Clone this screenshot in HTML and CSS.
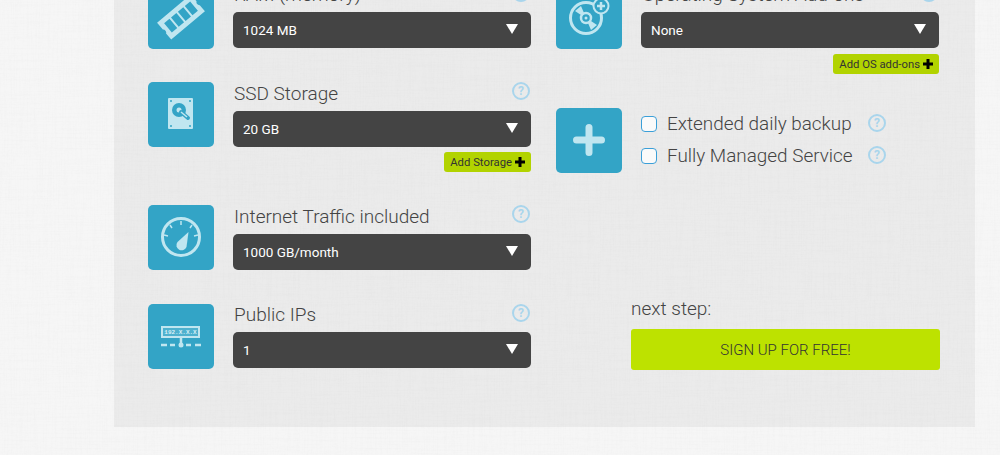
FILE: index.html
```html
<!DOCTYPE html>
<html lang="en">
<head>
  <meta charset="UTF-8">
  <title>Configure your server</title>
  <link rel="stylesheet" href="styles.css">
</head>
<body>
  <div class="panel">
    <div class="column">

      <div class="row row-tight">
        <div class="icon">
          <svg viewBox="0 0 66 65" width="66" height="65">
            <g transform="rotate(-40 33 33)">
              <path class="light" fill-rule="evenodd" d="M11 22h44v9a3 3 0 0 0 0 5v8H11v-8a3 3 0 0 0 0-5zM16 27v12h7V27zM25 27v12h7V27zM34 27v12h7V27zM43 27v12h7V27z"/>
            </g>
          </svg>
        </div>
        <div class="field">
          <div class="field-head"><label>RAM (memory)</label><span class="help">?</span></div>
          <div class="select"><select><option>1024 MB</option></select></div>
        </div>
      </div>

      <div class="row">
        <div class="icon">
          <svg viewBox="0 0 66 65" width="66" height="65">
            <rect class="light" x="20" y="16" width="25" height="31" rx="1"/>
            <circle class="dark" cx="31" cy="28" r="7"/>
            <circle class="light" cx="31" cy="28" r="2.500"/>
            <path class="dark-line" d="M33 30l7 6"/>
            <path class="light-line thin" d="M33 30l6 5"/>
            <circle class="dark" cx="23" cy="19" r="1"/><circle class="dark" cx="42" cy="19" r="1"/>
            <circle class="dark" cx="23" cy="44" r="1"/><circle class="dark" cx="42" cy="44" r="1"/>
          </svg>
        </div>
        <div class="field">
          <div class="field-head"><label>SSD Storage</label><span class="help">?</span></div>
          <div class="select"><select><option>20 GB</option></select></div>
          <div class="add-row"><a class="add" href="#">Add Storage <svg class="add-plus" viewBox="0 0 10 10" width="10" height="10"><path d="M3.5 0h3v3.5H10v3H6.500V10h-3V6.500H0v-3h3.500z"/></svg></a></div>
        </div>
      </div>

      <div class="row row-traffic">
        <div class="icon">
          <svg viewBox="0 0 66 65" width="66" height="65">
            <circle class="ring" cx="33" cy="32" r="18.500"/>
            <path class="light-line thin" d="M33 16v4M22 20l2 3M44 20l-2 3M16 30l4 1M50 30l-4 1"/>
            <path class="light" d="M40.500 27L38.500 42a5.200 5.200 0 1 1-9-5z"/>
          </svg>
        </div>
        <div class="field">
          <div class="field-head"><label>Internet Traffic included</label><span class="help">?</span></div>
          <div class="select"><select><option>1000 GB/month</option></select></div>
        </div>
      </div>

      <div class="row row-tight">
        <div class="icon">
          <svg viewBox="0 0 66 65" width="66" height="65">
            <rect class="ip-box" x="14" y="23" width="37" height="10"/>
            <text class="ip-text" x="32.500" y="30.300" text-anchor="middle">192.X.X.X</text>
            <path class="light-line" d="M33 34v7M13 41h6M22 41h5M38 41h5M47 41h6"/>
            <circle class="light" cx="33" cy="41" r="2.500"/>
          </svg>
        </div>
        <div class="field">
          <div class="field-head"><label>Public IPs</label><span class="help">?</span></div>
          <div class="select"><select><option>1</option></select></div>
        </div>
      </div>
    </div>

    <div class="column">
      <div class="row row-tight row-os">
        <div class="icon">
          <svg viewBox="0 0 66 65" width="66" height="65">
            <circle class="ring" cx="30" cy="34" r="15.500"/>
            <path class="light" d="M19 27l6-5 3 7-3 2zM41 41l-6 5-3-7 3-2z"/>
            <circle class="ring thin" cx="30" cy="34" r="5"/>
            <circle class="light" cx="30" cy="34" r="1.500"/>
            <circle class="badge" cx="45" cy="22" r="7.500"/>
            <path class="light-line" d="M45 18v8M41 22h8"/>
          </svg>
        </div>
        <div class="field">
          <div class="field-head"><label>Operating System Add-ons</label><span class="help">?</span></div>
          <div class="select"><select><option>None</option></select></div>
          <div class="add-row"><a class="add" href="#">Add OS add-ons <svg class="add-plus" viewBox="0 0 10 10" width="10" height="10"><path d="M3.5 0h3v3.5H10v3H6.500V10h-3V6.500H0v-3h3.500z"/></svg></a></div>
        </div>
      </div>

      <div class="row row-extras">
        <div class="icon">
          <svg viewBox="0 0 66 65" width="66" height="65">
            <path class="plus-line" d="M33 19.500v25M20.500 32h25"/>
          </svg>
        </div>
        <div class="checks">
          <div class="check"><input type="checkbox"><label>Extended daily backup</label><span class="help">?</span></div>
          <div class="check"><input type="checkbox"><label>Fully Managed Service</label><span class="help">?</span></div>
        </div>
      </div>

      <div class="next">
        <div class="next-label">next step:</div>
        <a class="signup" href="#">SIGN UP FOR FREE!</a>
      </div>
    </div>
  </div>
</body>
</html>
```

FILE: styles.css
```css
* {
  box-sizing: border-box;
  margin: 0;
  padding: 0;
}

html, body {
  height: 455px;
  overflow: hidden;
}

body {
  font-family: "Roboto", "Liberation Sans", sans-serif;
  font-weight: 300;
  color: #444;
  background-color: #f6f6f6;
  background-image: url("data:image/svg+xml,%3Csvg xmlns='http://www.w3.org/2000/svg' width='300' height='300'%3E%3Cfilter id='n'%3E%3CfeTurbulence type='fractalNoise' baseFrequency='0.02 0.7' numOctaves='2' stitchTiles='stitch'/%3E%3CfeColorMatrix values='0 0 0 0 0.5 0 0 0 0 0.5 0 0 0 0 0.5 0.5 0 0 0 -0.2'/%3E%3C/filter%3E%3Cfilter id='m'%3E%3CfeTurbulence type='fractalNoise' baseFrequency='0.7 0.02' numOctaves='2' stitchTiles='stitch'/%3E%3CfeColorMatrix values='0 0 0 0 0.5 0 0 0 0 0.5 0 0 0 0 0.5 0.5 0 0 0 -0.2'/%3E%3C/filter%3E%3Crect width='300' height='300' filter='url(%23n)' opacity='.15'/%3E%3Crect width='300' height='300' filter='url(%23m)' opacity='.15'/%3E%3C/svg%3E");
}

.panel {
  display: flex;
  gap: 24px;
  margin: -50px 25px 0 114px;
  padding: 34px 35px 57px 34px;
  background: rgba(0, 0, 0, 0.045);
}

.column {
  width: 384px;
}

.row {
  display: flex;
  margin-bottom: 33px;
}

.row:last-child {
  margin-bottom: 0;
}

.row-traffic {
  margin-bottom: 34px;
}

.row-os {
  margin-bottom: 34px;
}

.row-extras {
  margin-bottom: 0;
}

.icon {
  flex: none;
  width: 66px;
  height: 65px;
  border-radius: 5px;
  background: #33a4c6;
}

.icon svg {
  display: block;
}

.light {
  fill: #c0e6f0;
}

.dark {
  fill: #33a4c6;
}

.dark-line, .light-line, .plus-line {
  fill: none;
  stroke-linecap: round;
}

.dark-line {
  stroke: #33a4c6;
  stroke-width: 4;
}

.light-line {
  stroke: #c0e6f0;
  stroke-width: 2.500;
  stroke-linecap: butt;
}

.light-line.thin {
  stroke-width: 1.500;
}

.plus-line {
  stroke: #c0e6f0;
  stroke-width: 7;
}

.ring {
  fill: none;
  stroke: #c0e6f0;
  stroke-width: 3;
}

.ring.thin {
  stroke-width: 2.500;
}

.badge {
  fill: #33a4c6;
  stroke: #c0e6f0;
  stroke-width: 2;
}

.ip-box {
  fill: rgba(192, 230, 240, 0.2);
  stroke: #c0e6f0;
  stroke-width: 2;
}

.ip-text {
  font-family: "Liberation Mono", monospace;
  font-size: 6px;
  font-weight: 700;
  fill: #d8f0f6;
}

.field {
  width: 298px;
  margin-left: 19px;
}

.field-head {
  display: flex;
  justify-content: space-between;
  height: 29px;
}

.row-tight .field-head {
  height: 28px;
}

.field-head label {
  padding-left: 1px;
  font-size: 19px;
  line-height: 23px;
}

.row-tight .field-head label {
  line-height: 22px;
}

.help {
  flex: none;
  width: 18px;
  height: 18px;
  margin-right: 1px;
  border: 2px solid #a9d5ec;
  border-radius: 50%;
  color: #a9d5ec;
  font-size: 12px;
  font-weight: 700;
  line-height: 14px;
  text-align: center;
}

.select {
  position: relative;
  height: 36px;
}

.select::after {
  content: "";
  position: absolute;
  top: 12px;
  right: 13px;
  border-top: 10px solid #fff;
  border-left: 6px solid transparent;
  border-right: 6px solid transparent;
  pointer-events: none;
}

.select select {
  display: block;
  width: 100%;
  height: 36px;
  padding-left: 10px;
  border: none;
  border-radius: 5px;
  outline: none;
  appearance: none;
  background: #444;
  color: #fff;
  font-family: inherit;
  font-size: 13.500px;
  font-weight: 400;
}

.add-row {
  display: flex;
  justify-content: flex-end;
  margin-top: 5px;
}

.row-os .add-row {
  margin-top: 6px;
}

.add {
  display: flex;
  align-items: center;
  gap: 3px;
  height: 20px;
  padding: 0 6px;
  border-radius: 3px;
  background: #b2d300;
  color: #333;
  font-size: 11.300px;
  font-weight: 400;
  text-decoration: none;
}

.add-plus {
  display: block;
}

.checks {
  margin-left: 19px;
}

.check {
  display: flex;
  align-items: center;
  height: 32px;
}

.check input {
  flex: none;
  width: 16px;
  height: 16px;
  appearance: none;
  border: 1px solid #3b9fd8;
  border-radius: 4px;
  background: #fafafa;
}

.check label {
  width: 211px;
  padding: 0 0 2px 10px;
  font-size: 18.900px;
  white-space: nowrap;
}

.check .help {
  margin: -3px 0 0 0;
}

.next {
  margin: 124px 0 0 75px;
}

.next-label {
  height: 32px;
  font-size: 19px;
  line-height: 24px;
}

.signup {
  display: block;
  height: 41px;
  border-radius: 3px;
  background: #bde200;
  color: #333;
  font-size: 15px;
  line-height: 43px;
  text-align: center;
  text-decoration: none;
}
```
